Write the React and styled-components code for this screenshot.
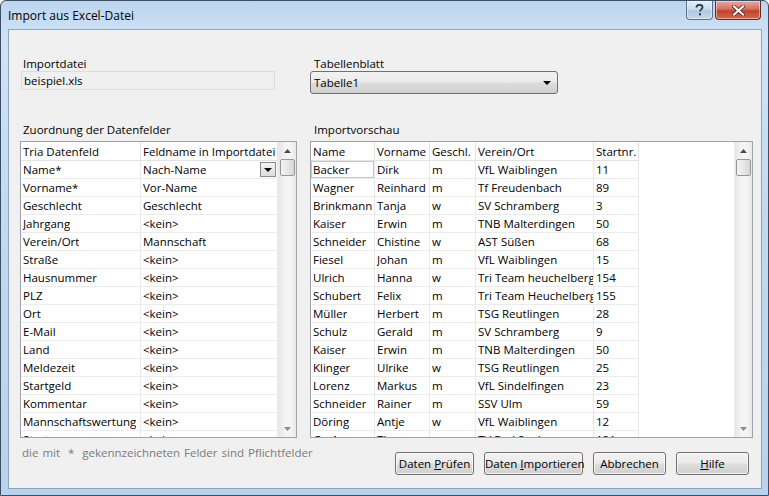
import React from "react";
import styled, { createGlobalStyle } from "styled-components";

const GlobalStyle = createGlobalStyle`
  html, body {
    margin: 0;
    padding: 0;
    background: #fff;
  }
  body {
    font-family: "Open Sans", "Noto Sans", "Liberation Sans", sans-serif;
    font-size: 11.5px;
    color: #000;
  }
`;

const Window = styled.div`
  width: 769px;
  height: 496px;
  box-sizing: border-box;
  border: 1px solid #3c4e64;
  border-radius: 6px 6px 0 0;
  background: linear-gradient(180deg, #bcd6ef 0%, #cfe3f6 8%, #c3daf0 40%, #b9d3ec 100%);
  display: flex;
  flex-direction: column;
`;

const TitleBar = styled.div`
  height: 28px;
  display: flex;
  align-items: flex-start;
  justify-content: space-between;
  padding-left: 7px;
`;

const Title = styled.div`
  margin-top: 6px;
  font-size: 12px;
  color: #000;
`;

const TitleButtons = styled.div`
  display: flex;
  gap: 2px;
  margin-right: 7px;
`;

const CaptionButton = styled.div`
  width: ${(p) => p.$w}px;
  height: 19px;
  box-sizing: border-box;
  border: 1px solid ${(p) => (p.$red ? "#6b2a21" : "#5f7287")};
  border-top: none;
  border-radius: 0 0 4px 4px;
  background: ${(p) =>
    p.$red
      ? "linear-gradient(180deg, #e9a99c 0%, #d7705e 45%, #c4402b 55%, #d36b4f 100%)"
      : "linear-gradient(180deg, #e3eef9 0%, #cadcee 45%, #b3c9df 55%, #c5d8ec 100%)"};
  display: flex;
  align-items: center;
  justify-content: center;
  box-shadow: inset 0 0 0 1px rgba(255, 255, 255, 0.45);
`;

const Client = styled.div`
  flex: 1;
  margin: 0 6px 6px 7px;
  border: 1px solid #8ca4bd;
  background: #f0f0f0;
  box-sizing: border-box;
  padding: 27px 9px 0 11px;
  display: flex;
  flex-direction: column;
`;

const Columns = styled.div`
  display: grid;
  grid-template-columns: 277px 443px;
  column-gap: 13px;
`;

const Column = styled.div`
  display: flex;
  flex-direction: column;
`;

const Label = styled.div`
  height: 14px;
  line-height: 14px;
  padding-left: ${(p) => p.$indent || 2}px;
  white-space: nowrap;
`;

const ReadOnlyField = styled.div`
  margin-left: 1px;
  width: 254px;
  height: 19px;
  box-sizing: border-box;
  border: 1px solid #dcdcdc;
  background: #f0f0f0;
  padding-left: 2px;
  line-height: 17px;
`;

const Combo = styled.div`
  width: 248px;
  height: 23px;
  box-sizing: border-box;
  border: 1px solid #707070;
  border-radius: 3px;
  background: linear-gradient(180deg, #f2f2f2 0%, #ebebeb 48%, #dddddd 52%, #cfcfcf 100%);
  display: flex;
  align-items: center;
  justify-content: space-between;
  padding: 0 6px 0 3px;
`;

const Triangle = styled.span`
  width: 0;
  height: 0;
  border-left: ${(p) => p.$s || 4}px solid transparent;
  border-right: ${(p) => p.$s || 4}px solid transparent;
  border-top: ${(p) => p.$s || 4}px solid #000;
`;

const Spacer = styled.div`
  height: ${(p) => p.$h}px;
`;

const Grid = styled.div`
  height: 297px;
  box-sizing: border-box;
  border: 1px solid #9da3aa;
  background: #fff;
  display: flex;
  overflow: hidden;
`;

const GridBody = styled.div`
  flex: 1;
  overflow: hidden;
`;

const Row = styled.div`
  display: flex;
  height: ${(p) => (p.$header ? 19 : p.$partial ? 7 : 18)}px;
  overflow: hidden;
  align-items: flex-start;
`;

const Cell = styled.div`
  width: ${(p) => p.$w}px;
  height: 18px;
  flex: ${(p) => (p.$fill ? 1 : "none")};
  box-sizing: border-box;
  border-right: 1px solid ${(p) => (p.$header ? "#e3e3e3" : "#e8e8e8")};
  border-bottom: 1px solid ${(p) => (p.$header ? "#e3e3e3" : "#ececec")};
  padding-left: 2px;
  line-height: 17px;
  white-space: nowrap;
  overflow: hidden;
  display: flex;
  align-items: center;
  justify-content: space-between;
  ${(p) => p.$header && "height: 19px;"}
  ${(p) => p.$focus && "box-shadow: inset 0 0 0 1px #a9cff0;"}
`;

const CellText = styled.span`
  overflow: hidden;
`;

const DropButton = styled.span`
  width: 16px;
  height: 15px;
  box-sizing: border-box;
  border: 1px solid #8a8a8a;
  background: linear-gradient(180deg, #f4f4f4, #dcdcdc);
  display: flex;
  align-items: center;
  justify-content: center;
  margin-right: 1px;
  flex: none;
`;

const Scrollbar = styled.div`
  width: 17px;
  flex: none;
  background: linear-gradient(90deg, #e6e6e6, #f4f4f4 40%, #f4f4f4 70%, #e8e8e8);
  border-left: 1px solid #ececec;
  display: flex;
  flex-direction: column;
  align-items: center;
`;

const ArrowBox = styled.div`
  height: 17px;
  width: 100%;
  display: flex;
  align-items: center;
  justify-content: center;
`;

const Thumb = styled.div`
  width: 15px;
  height: 17px;
  box-sizing: border-box;
  border: 1px solid #979797;
  border-radius: 2px;
  background: linear-gradient(90deg, #f3f3f3, #e8e8e8 50%, #d6d6d6);
`;

const Track = styled.div`
  flex: 1;
`;

const Footer = styled.div`
  display: flex;
  justify-content: space-between;
  align-items: flex-start;
`;

const Note = styled.div`
  color: #7a7a7a;
  padding-left: 2px;
  margin-top: 7px;
  word-spacing: 1px;
  white-space: nowrap;
`;

const Buttons = styled.div`
  display: flex;
  gap: 10px;
  margin-top: 14px;
  margin-right: 3px;
`;

const Button = styled.button`
  width: ${(p) => p.$w}px;
  height: 23px;
  box-sizing: border-box;
  border: 1px solid #707070;
  border-radius: 3px;
  background: linear-gradient(180deg, #f2f2f2 0%, #ebebeb 48%, #dddddd 52%, #cfcfcf 100%);
  box-shadow: inset 0 0 0 1px rgba(255, 255, 255, 0.7);
  font: inherit;
  color: #000;
  padding: 0;
  white-space: nowrap;
  u {
    text-decoration: underline;
  }
`;

const fields = [
  ["Name*", "Nach-Name"],
  ["Vorname*", "Vor-Name"],
  ["Geschlecht", "Geschlecht"],
  ["Jahrgang", "<kein>"],
  ["Verein/Ort", "Mannschaft"],
  ["Straße", "<kein>"],
  ["Hausnummer", "<kein>"],
  ["PLZ", "<kein>"],
  ["Ort", "<kein>"],
  ["E-Mail", "<kein>"],
  ["Land", "<kein>"],
  ["Meldezeit", "<kein>"],
  ["Startgeld", "<kein>"],
  ["Kommentar", "<kein>"],
  ["Mannschaftswertung", "<kein>"],
  ["Startnr.", "<kein>"],
];

const preview = [
  ["Backer", "Dirk", "m", "VfL Waiblingen", "11"],
  ["Wagner", "Reinhard", "m", "Tf Freudenbach", "89"],
  ["Brinkmann", "Tanja", "w", "SV Schramberg", "3"],
  ["Kaiser", "Erwin", "m", "TNB Malterdingen", "50"],
  ["Schneider", "Chistine", "w", "AST Süßen", "68"],
  ["Fiesel", "Johan", "m", "VfL Waiblingen", "15"],
  ["Ulrich", "Hanna", "w", "Tri Team heuchelberg", "154"],
  ["Schubert", "Felix", "m", "Tri Team Heuchelberg", "155"],
  ["Müller", "Herbert", "m", "TSG Reutlingen", "28"],
  ["Schulz", "Gerald", "m", "SV Schramberg", "9"],
  ["Kaiser", "Erwin", "m", "TNB Malterdingen", "50"],
  ["Klinger", "Ulrike", "w", "TSG Reutlingen", "25"],
  ["Lorenz", "Markus", "m", "VfL Sindelfingen", "23"],
  ["Schneider", "Rainer", "m", "SSV Ulm", "59"],
  ["Döring", "Antje", "w", "VfL Waiblingen", "12"],
  ["Graf", "Thomas", "m", "TV Bad Saulgau", "121"],
];

const previewCols = [
  ["Name", 64],
  ["Vorname", 55],
  ["Geschl.", 46],
  ["Verein/Ort", 118],
  ["Startnr.", 45],
];

const UpArrow = () => (
  <svg width="7" height="4" viewBox="0 0 7 4">
    <path d="M0 4 L3.5 0 L7 4 Z" fill="#4d4d4d" />
  </svg>
);

const DownArrow = () => (
  <svg width="7" height="4" viewBox="0 0 7 4">
    <path d="M0 0 L3.5 4 L7 0 Z" fill="#8a8a8a" />
  </svg>
);

const VScroll = () => (
  <Scrollbar>
    <ArrowBox>
      <UpArrow />
    </ArrowBox>
    <Thumb />
    <Track />
    <ArrowBox>
      <DownArrow />
    </ArrowBox>
  </Scrollbar>
);

export default function App() {
  return (
    <>
      <GlobalStyle />
      <Window>
        <TitleBar>
          <Title>Import aus Excel-Datei</Title>
          <TitleButtons>
            <CaptionButton $w={27}>
              <svg width="9" height="12" viewBox="0 0 9 12">
                <path
                  d="M1.5 3.5 C1.5 1.5 3 0.8 4.5 0.8 C6.3 0.8 7.5 2 7.5 3.4 C7.5 5.2 5 5.5 5 7.5"
                  fill="none"
                  stroke="#2b3a4c"
                  strokeWidth="1.8"
                />
                <rect x="4" y="9.3" width="2" height="2" fill="#2b3a4c" />
              </svg>
            </CaptionButton>
            <CaptionButton $w={46} $red>
              <svg width="13" height="11" viewBox="0 0 13 11">
                <path
                  d="M2 1.5 L11 9.5 M11 1.5 L2 9.5"
                  stroke="#4a1a12"
                  strokeWidth="3.6"
                  strokeLinecap="square"
                />
                <path
                  d="M2 1.5 L11 9.5 M11 1.5 L2 9.5"
                  stroke="#fff"
                  strokeWidth="2.2"
                  strokeLinecap="square"
                />
              </svg>
            </CaptionButton>
          </TitleButtons>
        </TitleBar>
        <Client>
          <Columns>
            <Column>
              <Label $indent={3}>Importdatei</Label>
              <ReadOnlyField>beispiel.xls</ReadOnlyField>
              <Spacer $h={33} />
              <Label $indent={3}>Zuordnung der Datenfelder</Label>
              <Spacer $h={4} />
              <Grid>
                <GridBody>
                  <Row $header>
                    <Cell $header $w={120}>Tria Datenfeld</Cell>
                    <Cell $header $fill>Feldname in Importdatei</Cell>
                  </Row>
                  {fields.map(([a, b], i) => (
                    <Row key={a} $partial={i === fields.length - 1}>
                      <Cell $w={120}>
                        <CellText>{a}</CellText>
                      </Cell>
                      <Cell $fill>
                        <CellText>{b}</CellText>
                        {i === 0 && (
                          <DropButton>
                            <Triangle $s={4} />
                          </DropButton>
                        )}
                      </Cell>
                    </Row>
                  ))}
                </GridBody>
                <VScroll />
              </Grid>
            </Column>
            <Column>
              <Label $indent={4}>Tabellenblatt</Label>
              <Combo>
                <span>Tabelle1</span>
                <Triangle $s={4} />
              </Combo>
              <Spacer $h={29} />
              <Label $indent={4}>Importvorschau</Label>
              <Spacer $h={4} />
              <Grid>
                <GridBody>
                  <Row $header>
                    {previewCols.map(([c, w]) => (
                      <Cell $header key={c} $w={w}>
                        {c}
                      </Cell>
                    ))}
                  </Row>
                  {preview.map((r, i) => (
                    <Row key={i} $partial={i === preview.length - 1}>
                      {r.map((v, j) => (
                        <Cell key={j} $w={previewCols[j][1]} $focus={i === 0 && j === 0}>
                          <CellText>{v}</CellText>
                        </Cell>
                      ))}
                    </Row>
                  ))}
                </GridBody>
                <VScroll />
              </Grid>
            </Column>
          </Columns>
          <Footer>
            <Note>die mit &nbsp;*&nbsp; gekennzeichneten Felder sind Pflichtfelder</Note>
            <Buttons>
              <Button $w={79}>
                Daten <u>P</u>rüfen
              </Button>
              <Button $w={99}>
                Daten <u>I</u>mportieren
              </Button>
              <Button $w={73}>Abbrechen</Button>
              <Button $w={73}>
                <u>H</u>ilfe
              </Button>
            </Buttons>
          </Footer>
        </Client>
      </Window>
    </>
  );
}
